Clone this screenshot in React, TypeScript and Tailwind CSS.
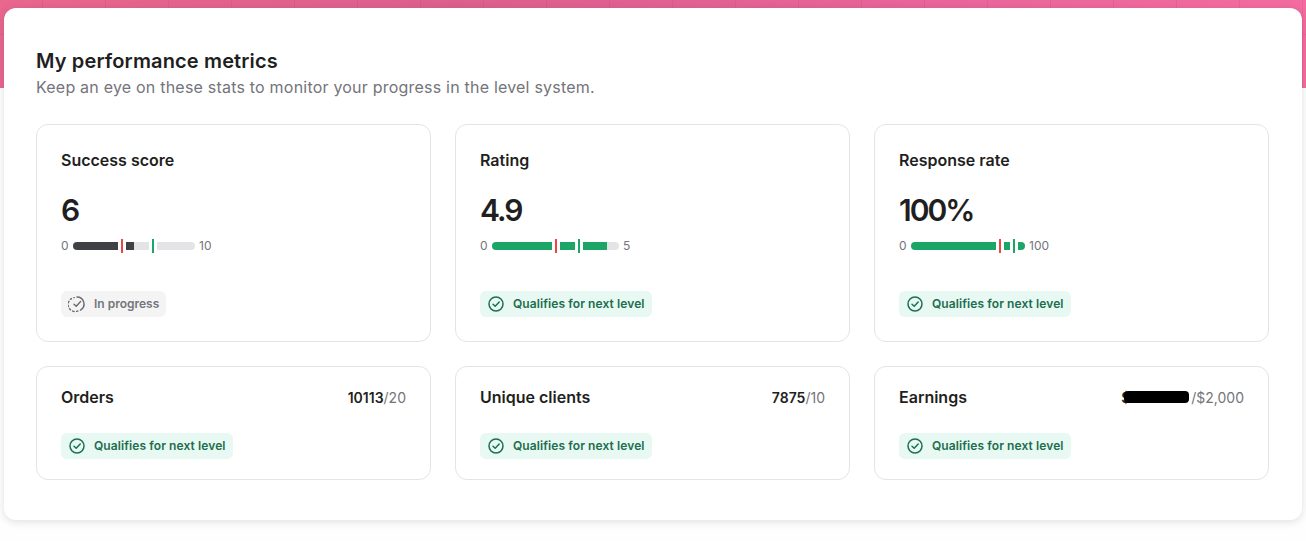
const sans = "font-['Inter','Noto_Sans',sans-serif]"

type Seg = { w: number; fill: number; first?: boolean; last?: boolean }

function CheckIcon({ dashed = false }: { dashed?: boolean }) {
  return (
    <svg width="18" height="18" viewBox="0 0 18 18" fill="none" className="shrink-0">
      {dashed ? (
        <>
          <path d="M9 2a7 7 0 0 1 3.5 13.06" stroke="#6b6b70" strokeWidth="1.4" strokeLinecap="round" />
          <path
            d="M9.9 15.94A7 7 0 1 1 6.2 2.58"
            stroke="#6b6b70"
            strokeWidth="1.4"
            strokeLinecap="round"
            strokeDasharray="1.4 2.5"
          />
          <path d="M6 9.2l2.2 2.1L12.6 6.6" stroke="#6b6b70" strokeWidth="1.4" strokeLinecap="round" strokeLinejoin="round" />
        </>
      ) : (
        <>
          <circle cx="9" cy="9" r="7" stroke="#1c7050" strokeWidth="1.5" />
          <path d="M6 9.2l2.2 2.1L12.2 7" stroke="#1c7050" strokeWidth="1.5" strokeLinecap="round" strokeLinejoin="round" />
        </>
      )}
    </svg>
  )
}

function Badge({ progress = false }: { progress?: boolean }) {
  if (progress) {
    return (
      <div className="inline-flex h-[26px] items-center gap-2 rounded-md bg-[#f4f4f5] px-[7px] text-[12px] font-semibold text-[#74747a]">
        <CheckIcon dashed />
        In progress
      </div>
    )
  }
  return (
    <div className="inline-flex h-[26px] items-center gap-2 rounded-md bg-[#e8f8f2] px-[7px] text-[12px] font-semibold tracking-[0.09px] text-[#1c6e4e]">
      <CheckIcon />
      Qualifies for next level
    </div>
  )
}

function Bar({ segs, color, min, max }: { segs: Seg[]; color: string; min: string; max: string }) {
  return (
    <div className="mt-[9px] flex h-[14px] items-center text-[12px] text-[#74747a]">
      <span className="w-3 shrink-0">{min}</span>
      <div className="flex items-center">
        {segs.map((s, i) => (
          <div key={i} className="flex items-center">
            <div
              className={`h-2 overflow-hidden bg-[#e4e4e7] ${s.first ? 'rounded-l-full' : ''} ${s.last ? 'rounded-r-full' : ''}`}
              style={{ width: s.w }}
            >
              <div className={`h-full ${color}`} style={{ width: s.fill }} />
            </div>
            {i === 0 && <div className="mx-[3px] h-[14px] w-[2px] bg-[#ef4444]" />}
            {i === 1 && <div className="mx-[3px] h-[14px] w-[2px] bg-[#1ba566]" />}
          </div>
        ))}
      </div>
      <span className="ml-1">{max}</span>
    </div>
  )
}

function ScoreCard({
  title,
  value,
  segs,
  color,
  max,
  progress,
}: {
  title: string
  value: string
  segs: Seg[]
  color: string
  max: string
  progress?: boolean
}) {
  return (
    <div className="h-[218px] rounded-xl border border-[#e4e4e7] bg-white px-6 pt-[23px]">
      <div className="text-[16px] leading-6 font-semibold text-[#1f1f22]">{title}</div>
      <div className="mt-[18px] text-[30px] leading-10 font-semibold tracking-[-2px] text-[#1f1f22]">{value}</div>
      <Bar segs={segs} color={color} min="0" max={max} />
      <div className="mt-[38px]">
        <Badge progress={progress} />
      </div>
    </div>
  )
}

function CountCard({ title, children }: { title: string; children: React.ReactNode }) {
  return (
    <div className="h-[114px] rounded-xl border border-[#e4e4e7] bg-white px-6 pt-[18px]">
      <div className="flex h-6 items-center justify-between">
        <span className="text-[16px] font-semibold text-[#1f1f22]">{title}</span>
        {children}
      </div>
      <div className="mt-6">
        <Badge />
      </div>
    </div>
  )
}

export default function App() {
  return (
    <div className={`relative h-[541px] w-[1306px] overflow-hidden bg-[#fefefe] ${sans}`}>
      {/* Pink banner behind the card */}
      <div className="absolute inset-x-0 top-0 h-[88px] [background-image:repeating-linear-gradient(90deg,transparent_0,transparent_42px,rgba(170,50,100,0.14)_42px,rgba(170,50,100,0.14)_43px,transparent_43px,transparent_63px),repeating-linear-gradient(180deg,transparent_0,transparent_34px,rgba(170,50,100,0.14)_34px,rgba(170,50,100,0.14)_35px,transparent_35px,transparent_63px),linear-gradient(90deg,#e9668f_0%,#dc5f8c_35%,#e8649a_70%,#f36c9f_100%)]" />

      <div className="relative mx-1 mt-2 h-[512px] rounded-xl bg-white pl-8 pr-[33px] pt-[39px] shadow-[0_2px_8px_rgba(0,0,0,0.12)]">
        <h1 className="text-[20px] leading-7 font-semibold tracking-[0.14px] text-[#1f1f22]">My performance metrics</h1>
        <p className="text-[16px] leading-6 tracking-[0.21px] text-[#74747a]">
          Keep an eye on these stats to monitor your progress in the level system.
        </p>

        <div className="mt-[25px] grid grid-cols-3 gap-6">
          <ScoreCard
            title="Success score"
            value="6"
            color="bg-[#404145]"
            max="10"
            progress
            segs={[
              { w: 45, fill: 45, first: true },
              { w: 23, fill: 8 },
              { w: 38, fill: 0, last: true },
            ]}
          />
          <ScoreCard
            title="Rating"
            value="4.9"
            color="bg-[#1ba566]"
            max="5"
            segs={[
              { w: 60, fill: 60, first: true },
              { w: 15, fill: 15 },
              { w: 36, fill: 24, last: true },
            ]}
          />
          <ScoreCard
            title="Response rate"
            value="100%"
            color="bg-[#1ba566]"
            max="100"
            segs={[
              { w: 85, fill: 85, first: true },
              { w: 6, fill: 6 },
              { w: 7, fill: 7, last: true },
            ]}
          />

          <CountCard title="Orders">
            <span className="text-[14px] text-[#74747a]">
              <span className="font-semibold text-[#1f1f22]">10113</span>/20
            </span>
          </CountCard>
          <CountCard title="Unique clients">
            <span className="text-[14px] text-[#74747a]">
              <span className="font-semibold text-[#1f1f22]">7875</span>/10
            </span>
          </CountCard>
          <CountCard title="Earnings">
            <span className="flex text-[14px] text-[#74747a]">
              <span className="relative w-[70px] font-semibold text-[#1f1f22]">
                $
                {/* Redacted amount */}
                <span className="absolute left-[3px] top-[4px] h-3 w-[65px] rounded-[4px] bg-black" />
              </span>
              /$2,000
            </span>
          </CountCard>
        </div>
      </div>
    </div>
  )
}
